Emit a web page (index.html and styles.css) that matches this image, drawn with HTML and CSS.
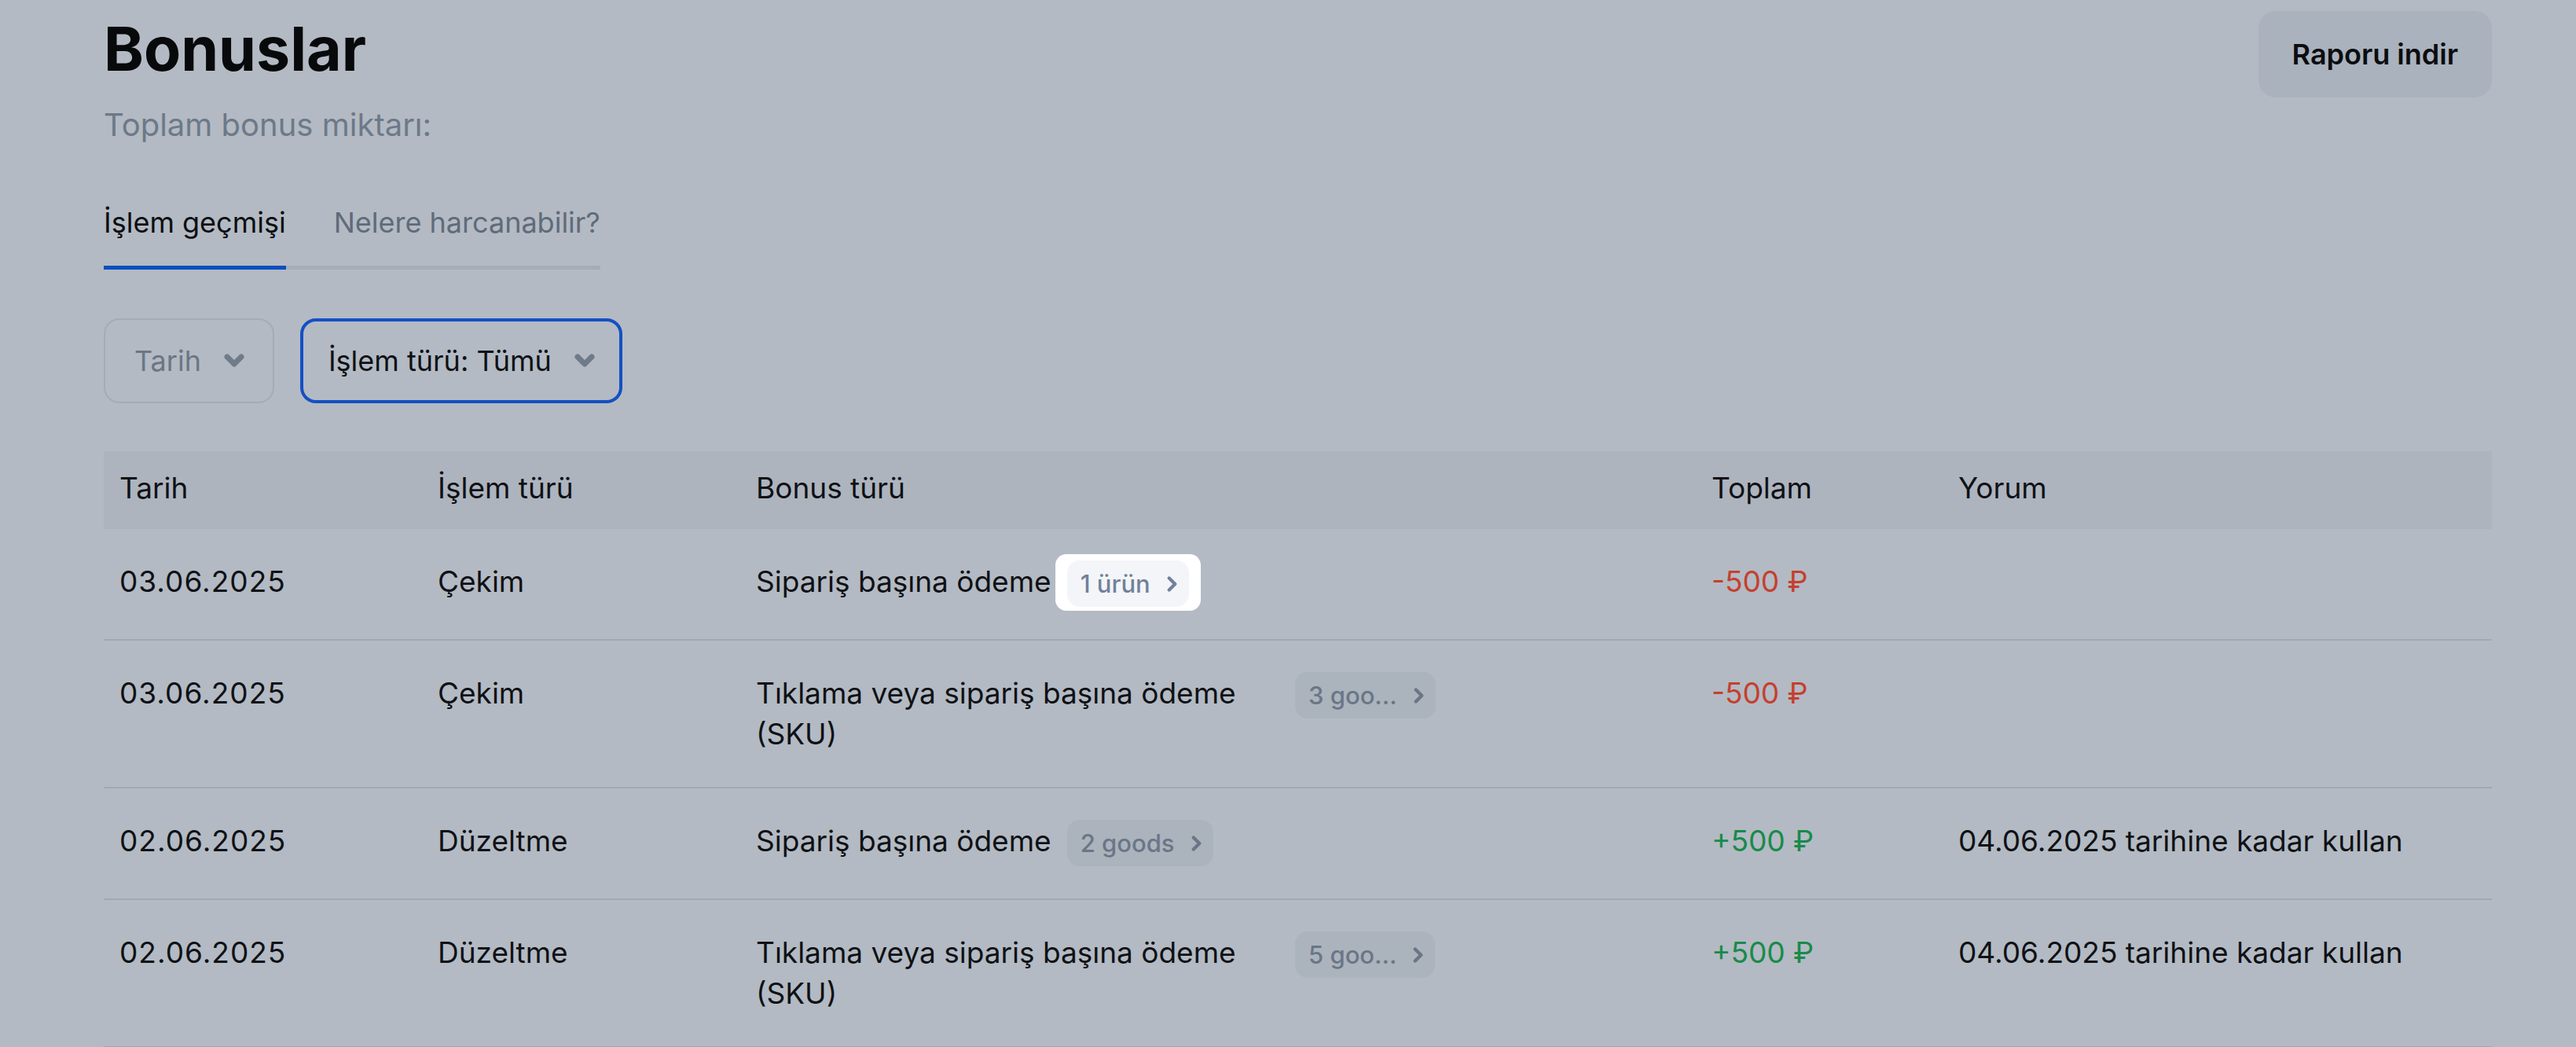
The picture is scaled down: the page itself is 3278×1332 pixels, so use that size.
FILE: index.html
```html
<!DOCTYPE html>
<html lang="tr">
<head>
    <meta charset="UTF-8">
    <meta name="viewport" content="width=device-width, initial-scale=1.0">
    <title>Bonuslar</title>
    <link rel="stylesheet" href="styles.css">
</head>
<body>
    <div class="page">
        <header class="page-head">
            <div>
                <h1 class="title">Bonuslar</h1>
                <p class="subtitle">Toplam bonus miktarı:</p>
            </div>
            <button class="btn">Raporu indir</button>
        </header>

        <nav class="tabs">
            <a class="tab tab--active">İşlem geçmişi</a>
            <a class="tab">Nelere harcanabilir?</a>
        </nav>

        <div class="filters">
            <button class="filter">
                <span>Tarih</span>
                <svg class="filter-arrow" viewBox="0 0 28 20"><path d="M5 5l9 9 9-9"/></svg>
            </button>
            <button class="filter filter--active">
                <span>İşlem türü: Tümü</span>
                <svg class="filter-arrow" viewBox="0 0 28 20"><path d="M5 5l9 9 9-9"/></svg>
            </button>
        </div>

        <table class="history">
            <colgroup>
                <col style="width: 405px">
                <col style="width: 405px">
                <col style="width: 1216px">
                <col style="width: 314px">
                <col style="width: 699px">
            </colgroup>
            <thead>
                <tr>
                    <th>Tarih</th>
                    <th>İşlem türü</th>
                    <th>Bonus türü</th>
                    <th>Toplam</th>
                    <th>Yorum</th>
                </tr>
            </thead>
            <tbody>
                <tr>
                    <td class="date">03.06.2025</td>
                    <td>Çekim</td>
                    <td>
                        <div class="bonus">
                            <span class="bonus-name">Sipariş başına ödeme</span>
                            <span class="spot">
                                <span class="chip">1 ürün <svg viewBox="0 0 12 16"><path d="M3 2l6 6-6 6"/></svg></span>
                            </span>
                        </div>
                    </td>
                    <td class="amount amount--minus">-500&nbsp;₽</td>
                    <td></td>
                </tr>
                <tr>
                    <td class="date">03.06.2025</td>
                    <td>Çekim</td>
                    <td>
                        <div class="bonus">
                            <span class="bonus-name">Tıklama veya sipariş başına ödeme (SKU)</span>
                            <span class="chip">3 goo... <svg viewBox="0 0 12 16"><path d="M3 2l6 6-6 6"/></svg></span>
                        </div>
                    </td>
                    <td class="amount amount--minus">-500&nbsp;₽</td>
                    <td></td>
                </tr>
                <tr>
                    <td class="date">02.06.2025</td>
                    <td>Düzeltme</td>
                    <td>
                        <div class="bonus">
                            <span class="bonus-name">Sipariş başına ödeme</span>
                            <span class="chip">2 goods <svg viewBox="0 0 12 16"><path d="M3 2l6 6-6 6"/></svg></span>
                        </div>
                    </td>
                    <td class="amount amount--plus">+500&nbsp;₽</td>
                    <td>04.06.2025 tarihine kadar kullan</td>
                </tr>
                <tr>
                    <td class="date">02.06.2025</td>
                    <td>Düzeltme</td>
                    <td>
                        <div class="bonus">
                            <span class="bonus-name">Tıklama veya sipariş başına ödeme (SKU)</span>
                            <span class="chip">5 goo... <svg viewBox="0 0 12 16"><path d="M3 2l6 6-6 6"/></svg></span>
                        </div>
                    </td>
                    <td class="amount amount--plus">+500&nbsp;₽</td>
                    <td>04.06.2025 tarihine kadar kullan</td>
                </tr>
            </tbody>
        </table>
    </div>
</body>
</html>
```

FILE: styles.css
```css
* {
    box-sizing: border-box;
}

body {
    margin: 0;
    background: #b3bac3;
    font-family: Inter, "Noto Sans", sans-serif;
    color: #0f1115;
}

.page {
    padding: 14px 107px 0 132px;
}

.page-head {
    display: flex;
    justify-content: space-between;
    align-items: flex-start;
}

.title {
    margin: 0;
    font-size: 77px;
    line-height: 96px;
    font-weight: 700;
    color: #08090b;
}

.subtitle {
    margin: 23px 0 0;
    font-size: 40px;
    line-height: 52px;
    color: #6d7988;
}

.btn {
    font: 600 36px/48px Inter, "Noto Sans", sans-serif;
    padding: 31px 43px;
    border: none;
    border-radius: 22px;
    background: #aab2bd;
    color: #0b0d10;
    cursor: pointer;
}

/* tabs */
.tabs {
    display: flex;
    gap: 61px;
    width: max-content;
    margin-top: 74px;
    border-bottom: 5px solid #a4adb8;
}

.tab {
    font-size: 36px;
    line-height: 48px;
    padding-bottom: 31px;
    margin-bottom: -5px;
    border-bottom: 5px solid transparent;
    color: #5f6b7a;
    cursor: pointer;
}

.tab--active {
    color: #0c0e12;
    border-bottom-color: #0d4ec2;
}

/* filters */
.filters {
    display: flex;
    gap: 33px;
    margin-top: 62px;
}

.filter {
    display: inline-flex;
    align-items: center;
    gap: 28px;
    font: 400 36px/48px Inter, "Noto Sans", sans-serif;
    padding: 28px 35px 28px 37px;
    border: 2px solid #a3acb7;
    border-radius: 20px;
    background: transparent;
    color: #6b7684;
    cursor: pointer;
}

.filter--active {
    padding: 26px 30px 26px 32px;
    border: 4px solid #1450c4;
    color: #0f1115;
}

.filter-arrow {
    width: 28px;
    height: 20px;
    fill: none;
    stroke: #707b89;
    stroke-width: 7;
    stroke-linecap: round;
    stroke-linejoin: round;
}

/* table */
.history {
    width: 100%;
    margin-top: 61px;
    border-collapse: collapse;
    table-layout: fixed;
    font-size: 37px;
    line-height: 52px;
}

.history th {
    background: #adb4be;
    text-align: left;
    font-weight: 400;
    padding: 21px 20px 26px;
}

.history td {
    padding: 41px 20px;
    border-bottom: 2px solid #9fa9b5;
    vertical-align: top;
}

.date {
    letter-spacing: 1px;
}

.bonus {
    display: flex;
    align-items: flex-start;
    gap: 20px;
}

.bonus-name {
    max-width: 666px;
}

.chip {
    display: inline-flex;
    align-items: center;
    gap: 20px;
    height: 59px;
    margin-top: -1px;
    padding: 0 14px 0 17px;
    border-radius: 16px;
    background: #abb3bd;
    color: #6a7686;
    font-size: 31px;
    font-weight: 500;
    white-space: nowrap;
    flex-shrink: 0;
}

.chip svg {
    width: 15px;
    height: 20px;
    fill: none;
    stroke: currentColor;
    stroke-width: 3.4;
    stroke-linecap: round;
    stroke-linejoin: round;
}

/* highlighted chip */
.spot {
    display: flex;
    margin: -9px -15px -5px;
    padding: 8px 15px 5px;
    background: #fff;
    border-radius: 14px;
}

.spot .chip {
    margin-top: 0;
    background: #f3f5f8;
    color: #72819a;
}

.amount--minus {
    color: #c5402f;
}

.amount--plus {
    color: #198a4a;
}
```
